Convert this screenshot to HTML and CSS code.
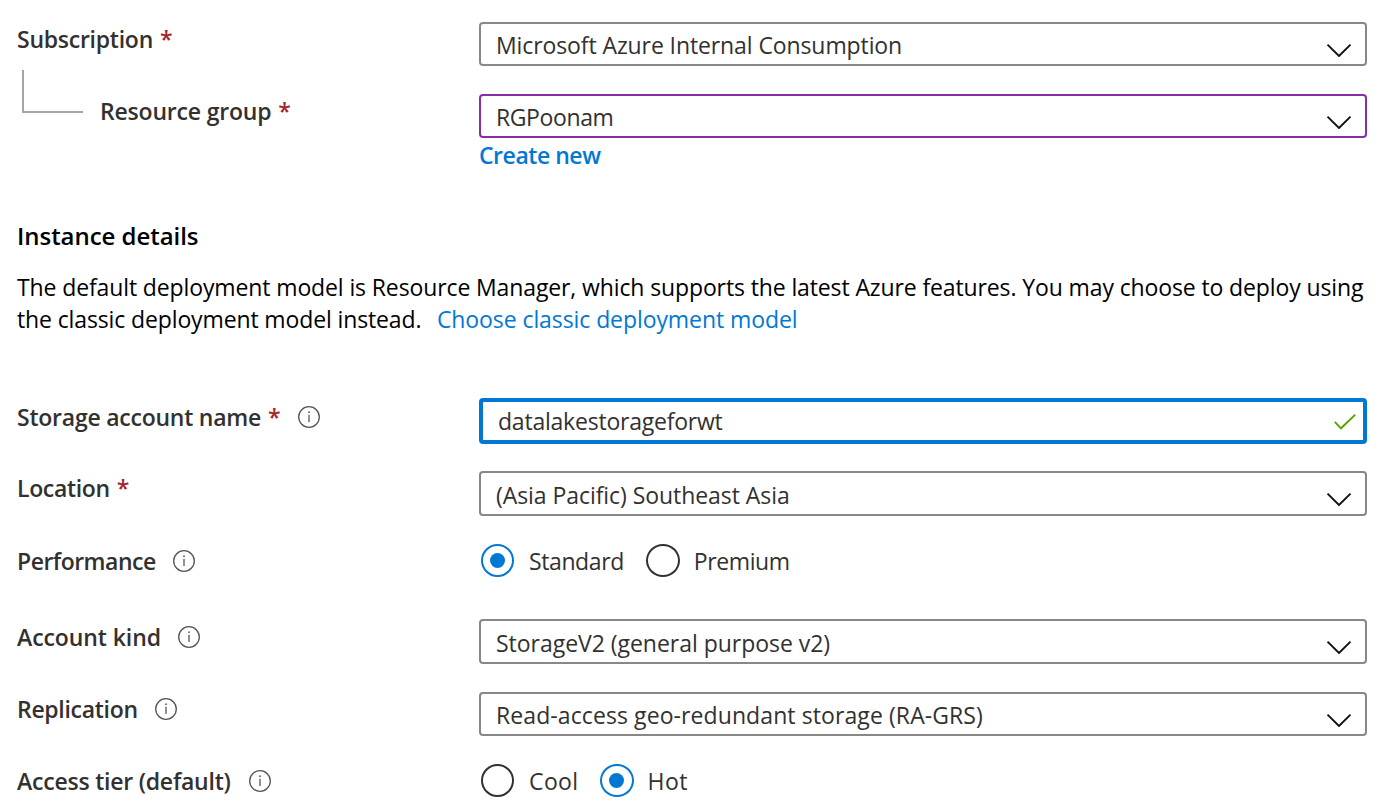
FILE: index.html
```html
<!DOCTYPE html>
<html lang="en">
<head>
<meta charset="utf-8">
<title>Create storage account</title>
<link rel="stylesheet" href="styles.css">
</head>
<body>
<svg class="defs" aria-hidden="true">
  <symbol id="chevron" viewBox="0 0 26 14"><path d="M1.5 1.6 L13 13 L24.5 1.6" fill="none" stroke="#111" stroke-width="1.9"/></symbol>
  <symbol id="info" viewBox="0 0 22 22"><circle cx="11" cy="11" r="10.3" fill="none" stroke="#555" stroke-width="1.3"/><path d="M11 8.7V16" stroke="#555" stroke-width="1.3"/><circle cx="11" cy="6.2" r=".9" fill="#555"/></symbol>
</svg>
<form class="form">
  <div class="row row-subscription">
    <div class="label"><span class="t-subscription">Subscription</span><span class="required">*</span></div>
    <div class="select"><span class="t-consumption">Microsoft Azure Internal Consumption</span><svg class="chevron"><use href="#chevron"/></svg></div>
  </div>
  <div class="row row-group">
    <div class="label"><span class="connector"></span><span class="t-group">Resource group</span><span class="required">*</span></div>
    <div>
      <div class="select select-edited"><span class="t-rg">RGPoonam</span><svg class="chevron"><use href="#chevron"/></svg></div>
      <a class="create">Create new</a>
    </div>
  </div>
  <h2 class="heading">Instance details</h2>
  <p class="intro"><span class="intro-first">The default deployment model is Resource Manager, which supports the latest Azure features. You may choose to deploy using</span><br><span class="intro-second">the classic deployment model instead.</span><a class="classic">Choose classic deployment model</a></p>
  <div class="row row-name">
    <div class="label"><span class="t-name">Storage account name</span><span class="required">*</span><svg class="info"><use href="#info"/></svg></div>
    <div class="input"><span class="t-value">datalakestorageforwt</span><svg class="check" viewBox="0 0 24 18"><path d="M1.8 8.8 L8 15.3 L22.2 1.6" fill="none" stroke="#57a300" stroke-width="1.9"/></svg></div>
  </div>
  <div class="row row-location">
    <div class="label"><span class="t-location">Location</span><span class="required">*</span></div>
    <div class="select select-tall"><span class="t-asia">(Asia Pacific) Southeast Asia</span><svg class="chevron"><use href="#chevron"/></svg></div>
  </div>
  <div class="row row-performance">
    <div class="label"><span class="t-performance">Performance</span><svg class="info"><use href="#info"/></svg></div>
    <div class="radios">
      <span class="radio radio-on"></span><span class="option t-standard">Standard</span>
      <span class="radio"></span><span class="option t-premium">Premium</span>
    </div>
  </div>
  <div class="row row-kind">
    <div class="label"><span class="t-kind">Account kind</span><svg class="info"><use href="#info"/></svg></div>
    <div class="select select-tall"><span class="t-v2">StorageV2 (general purpose v2)</span><svg class="chevron"><use href="#chevron"/></svg></div>
  </div>
  <div class="row row-replication">
    <div class="label"><span class="t-replication">Replication</span><svg class="info"><use href="#info"/></svg></div>
    <div class="select"><span class="t-ragrs">Read-access geo-redundant storage (RA-GRS)</span><svg class="chevron"><use href="#chevron"/></svg></div>
  </div>
  <div class="row row-tier">
    <div class="label"><span class="t-tier">Access tier (default)</span><svg class="info"><use href="#info"/></svg></div>
    <div class="radios">
      <span class="radio"></span><span class="option t-cool">Cool</span>
      <span class="radio radio-on"></span><span class="option t-hot">Hot</span>
    </div>
  </div>
</form>
</body>
</html>
```

FILE: styles.css
```css
* { box-sizing: border-box; }
body {
  margin: 0;
  height: 804px;
  overflow: hidden;
  background: #fff;
  color: #323130;
  font: 23px/32px "Open Sans", "Noto Sans", sans-serif;
  white-space: nowrap;
}
.defs { display: none; }
.form { padding: 22px 23px 0 17px; }

.row { display: grid; grid-template-columns: 462px 888px; align-items: start; }
.row-subscription { height: 72px; }
.row-group { height: 126px; }
.row-name { height: 73px; }
.row-location { height: 73px; }
.row-performance { height: 75px; }
.row-kind { height: 73px; }
.row-replication { height: 72px; }
.row-tier { height: 40px; }

.label { display: flex; align-items: center; height: 32px; margin-top: 1px; font-weight: 600; }
.row-name .label { margin-top: 3px; }
.row-kind .label { margin-top: 2px; }
.required { width: 12px; margin-left: 7px; color: #a4262c; }
.info { width: 22px; height: 22px; margin-left: 17px; overflow: visible; }
.required + .info { margin-left: 18px; }
.row-tier .info { margin-left: 18px; }
.connector {
  width: 61px;
  height: 43px;
  margin: -39px 17px 0 5px;
  border: solid #a6a6a6;
  border-width: 0 0 2px 2px;
}

.select {
  display: flex;
  justify-content: space-between;
  align-items: flex-start;
  height: 44px;
  padding: 5px 13px 0 15px;
  border: 2px solid #8a8886;
  border-radius: 4px;
}
.select-tall { height: 45px; padding-top: 6px; }
.select-edited { border-color: #8a2da5; }
.chevron { width: 26px; height: 14px; margin-top: 14px; }
.select-tall .chevron { margin-top: 13px; }
.input {
  display: flex;
  justify-content: space-between;
  height: 46px;
  padding: 3px 6px 0 15px;
  border: 4px solid #0078d4;
  border-radius: 4px;
}
.check { width: 24px; height: 18px; margin-top: 8px; }
.create {
  display: block;
  margin-top: 1px;
  color: #0078d4;
  font-weight: 600;
  letter-spacing: -.46px;
}

.heading { margin: 0 0 19px; color: #000; font-size: 24px; line-height: 32px; font-weight: 600; letter-spacing: -.04px; }
.intro { margin: 0 0 63px; color: #000; }
.intro-first { letter-spacing: -.119px; }
.intro-second { letter-spacing: -.125px; }
.classic { margin-left: 15.5px; color: #0078d4; letter-spacing: -.08px; }

.radios { display: flex; align-items: center; height: 33px; }
.radio {
  display: flex;
  align-items: center;
  justify-content: center;
  flex: none;
  width: 33px;
  height: 33px;
  margin-left: 2px;
  border: 2px solid #323130;
  border-radius: 50%;
}
.radio-on { border-color: #0078d4; }
.radio-on::before { content: ""; width: 15px; height: 15px; border-radius: 50%; background: #0078d4; }
.option { height: 32px; margin: 1px 0 0 15px; }
.option + .radio { width: 34px; margin-left: 22px; }
.t-cool + .radio { margin-left: 21px; }
.option.t-premium, .option.t-hot { margin-left: 14px; }

.t-subscription { letter-spacing: -.25px; }
.t-group { letter-spacing: -.19px; }
.t-replication { letter-spacing: -.3px; }
.t-consumption { letter-spacing: -.1px; }
.t-asia { letter-spacing: -.06px; }
.t-kind { letter-spacing: -.08px; }
.t-v2 { letter-spacing: -.03px; }
.t-rg { letter-spacing: -.4px; }
.t-name { letter-spacing: -.23px; }
.t-value { letter-spacing: -.22px; }
.t-tier { letter-spacing: -.22px; }
.t-location { letter-spacing: -.35px; }
.t-performance { letter-spacing: -.5px; }
.t-standard { letter-spacing: -.4px; }
.t-premium { letter-spacing: -.4px; }
.t-ragrs { letter-spacing: .09px; }
.t-cool { letter-spacing: .4px; }
.t-hot { letter-spacing: .4px; }
```
